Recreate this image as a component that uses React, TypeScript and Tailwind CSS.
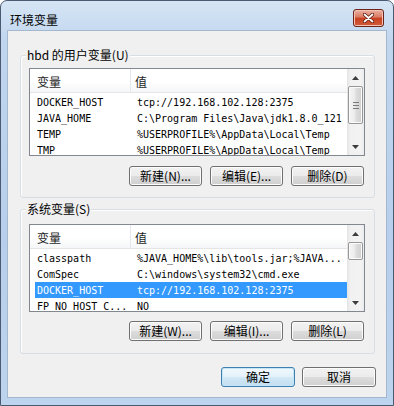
import type { ReactNode } from "react";

const cjk = "font-['Noto_Sans_CJK_SC','Noto_Sans',sans-serif]";
const mono = "font-['DejaVu_Sans_Mono','Noto_Sans_CJK_SC',monospace]";

type Row = { name: string; value: string; selected?: boolean };

const userVars: Row[] = [
  { name: "DOCKER_HOST", value: "tcp://192.168.102.128:2375" },
  { name: "JAVA_HOME", value: "C:\\Program Files\\Java\\jdk1.8.0_121" },
  { name: "TEMP", value: "%USERPROFILE%\\AppData\\Local\\Temp" },
  { name: "TMP", value: "%USERPROFILE%\\AppData\\Local\\Temp" },
];

const systemVars: Row[] = [
  { name: "classpath", value: "%JAVA_HOME%\\lib\\tools.jar;%JAVA..." },
  { name: "ComSpec", value: "C:\\windows\\system32\\cmd.exe" },
  { name: "DOCKER_HOST", value: "tcp://192.168.102.128:2375", selected: true },
  { name: "FP_NO_HOST_C...", value: "NO" },
];

function Arrow({ down }: { down?: boolean }) {
  return (
    <div className="flex h-[17px] shrink-0 items-center justify-center">
      <svg width="7" height="4" viewBox="0 0 7 4">
        {down ? (
          <path d="M0 0h7L3.5 4z" fill="#3d3d3d" />
        ) : (
          <path d="M0 4h7L3.5 0z" fill="#3d3d3d" />
        )}
      </svg>
    </div>
  );
}

function ScrollBar({ thumb, grip }: { thumb: string; grip?: boolean }) {
  return (
    <div className="flex w-[17px] shrink-0 flex-col bg-[linear-gradient(90deg,#e4e4e4,#f1f1f1_20%,#f3f3f3_80%,#ebebeb)]">
      <Arrow />
      <div className="flex-1">
        <div
          className={`${thumb} mx-[1px] flex flex-col items-center justify-center gap-[2px] rounded-[2px] border border-[#979797] bg-[linear-gradient(90deg,#f6f6f6,#eaeaea_45%,#dcdcdc_55%,#d0d0d0)] shadow-[inset_0_0_0_1px_#fbfbfb]`}
        >
          {grip && (
            <>
              <div className="h-[1px] w-[6px] bg-[#7b7b7b]" />
              <div className="h-[1px] w-[6px] bg-[#7b7b7b]" />
              <div className="h-[1px] w-[6px] bg-[#7b7b7b]" />
            </>
          )}
        </div>
      </div>
      <Arrow down />
    </div>
  );
}

function VarList({ rows, thumb, grip }: { rows: Row[]; thumb: string; grip?: boolean }) {
  return (
    <div className="flex h-[88px] w-full border border-[#828790] bg-white">
      <div className="flex min-w-0 flex-1 flex-col overflow-hidden">
        <div className={`flex h-[24px] shrink-0 border-b border-[#e5e5e5] bg-[linear-gradient(#ffffff,#ffffff_55%,#f5f6f7)] text-[12px] text-[#1e1e1e] ${cjk}`}>
          <div className="flex w-[101px] items-center border-r border-[#e3e8ee] pl-[7px] pt-[2px]">变量</div>
          <div className="flex items-center pl-[4px] pt-[2px]">值</div>
        </div>
        <div className="pt-[1px]">
          {rows.map((r) => (
            <div
              key={r.name}
              className={
                r.selected
                  ? `ml-[5px] flex h-[16px] items-center whitespace-nowrap bg-[#3399ff] text-[10px] text-white ${mono}`
                  : `ml-[5px] flex h-[16px] items-center whitespace-nowrap text-[10px] text-black ${mono}`
              }
            >
              <div className="w-[102px] shrink-0 pl-[2px]">{r.name}</div>
              <div>{r.value}</div>
            </div>
          ))}
        </div>
      </div>
      <ScrollBar thumb={thumb} grip={grip} />
    </div>
  );
}

function Btn({ children, primary, wide }: { children: ReactNode; primary?: boolean; wide?: boolean }) {
  const size = wide ? "w-[74px]" : "w-[73px]";
  return (
    <button
      className={
        primary
          ? `${size} h-[20px] rounded-[3px] border border-[#3c7fb1] bg-[linear-gradient(#f1f8fd,#e3f1fa_50%,#d2e8f6_50%,#c2def1)] text-[12px] leading-none text-black shadow-[inset_0_0_0_1px_#c6e6f8] ${cjk}`
          : `${size} h-[20px] rounded-[3px] border border-[#707070] bg-[linear-gradient(#f2f2f2,#ebebeb_50%,#dddddd_50%,#cfcfcf)] text-[12px] leading-none text-black shadow-[inset_0_0_0_1px_#fcfcfc] ${cjk}`
      }
    >
      {children}
    </button>
  );
}

function Group({ label, children, top, className }: { label: ReactNode; children: ReactNode; top: string; className: string }) {
  return (
    <div className={`relative w-[355px] rounded-[3px] border border-[#d5dfe5] shadow-[inset_1px_1px_0_#ffffff] ${className}`}>
      <span className={`absolute left-[5px] ${top} bg-[#f0f0f0] px-[1px] text-[12px] leading-[14px] text-black ${cjk}`}>
        {label}
      </span>
      {children}
    </div>
  );
}

export default function App() {
  return (
    <div className="h-[406px] w-[394px] bg-white">
      <div className="flex h-full w-full flex-col rounded-t-[7px] border border-[#4a5a70] bg-[linear-gradient(180deg,#d6e5f5,#c0d6ef_10%,#b7cfec_60%,#bdd4ee)] px-[6px] pb-[7px]">
        {/* title bar */}
        <div className="flex h-[29px] shrink-0 items-start">
          <span className={`mt-[12px] pl-[3px] text-[12px] leading-[14px] text-black ${cjk}`}>环境变量</span>
          <div className="ml-auto mr-[3px] mt-[8px] flex h-[18px] w-[31px] items-center justify-center rounded-[3px] border border-[#6b2417] bg-[linear-gradient(#eab0a2,#d97a62_45%,#c9401f_50%,#cf5b3a)] shadow-[inset_0_0_0_1px_#f3c3b6]">
            <svg width="11" height="10" viewBox="0 0 11 10">
              <path d="M1.5 1.5l8 7M9.5 1.5l-8 7" stroke="#5a1a10" strokeWidth="3.4" strokeLinecap="round" />
              <path d="M1.5 1.5l8 7M9.5 1.5l-8 7" stroke="#ffffff" strokeWidth="1.8" strokeLinecap="round" />
            </svg>
          </div>
        </div>

        {/* client area */}
        <div className="flex flex-1 flex-col border border-[#a3b7cf] bg-[#f0f0f0] pl-[12px] pt-[24px]">
          <Group label={<>hbd 的用户变量(U)</>} top="top-[-8px]" className="pb-[11px] pl-[8px] pr-[9px] pt-[12px]">
            <VarList rows={userVars} thumb="h-[38px]" grip />
            <div className="mr-[1px] mt-[10px] flex justify-end gap-[8px]">
              <Btn>新建(N)...</Btn>
              <Btn>编辑(E)...</Btn>
              <Btn>删除(D)</Btn>
            </div>
          </Group>

          <Group label="系统变量(S)" top="top-[-8px]" className="mt-[11px] pb-[12px] pl-[8px] pr-[9px] pt-[14px]">
            <VarList rows={systemVars} thumb="h-[18px]" />
            <div className="mr-[1px] mt-[9px] flex justify-end gap-[8px]">
              <Btn>新建(W)...</Btn>
              <Btn>编辑(I)...</Btn>
              <Btn>删除(L)</Btn>
            </div>
          </Group>

          <div className="mr-[10px] mt-[13px] flex justify-end gap-[7px]">
            <Btn primary wide>确定</Btn>
            <Btn wide>取消</Btn>
          </div>
        </div>
      </div>
    </div>
  );
}
